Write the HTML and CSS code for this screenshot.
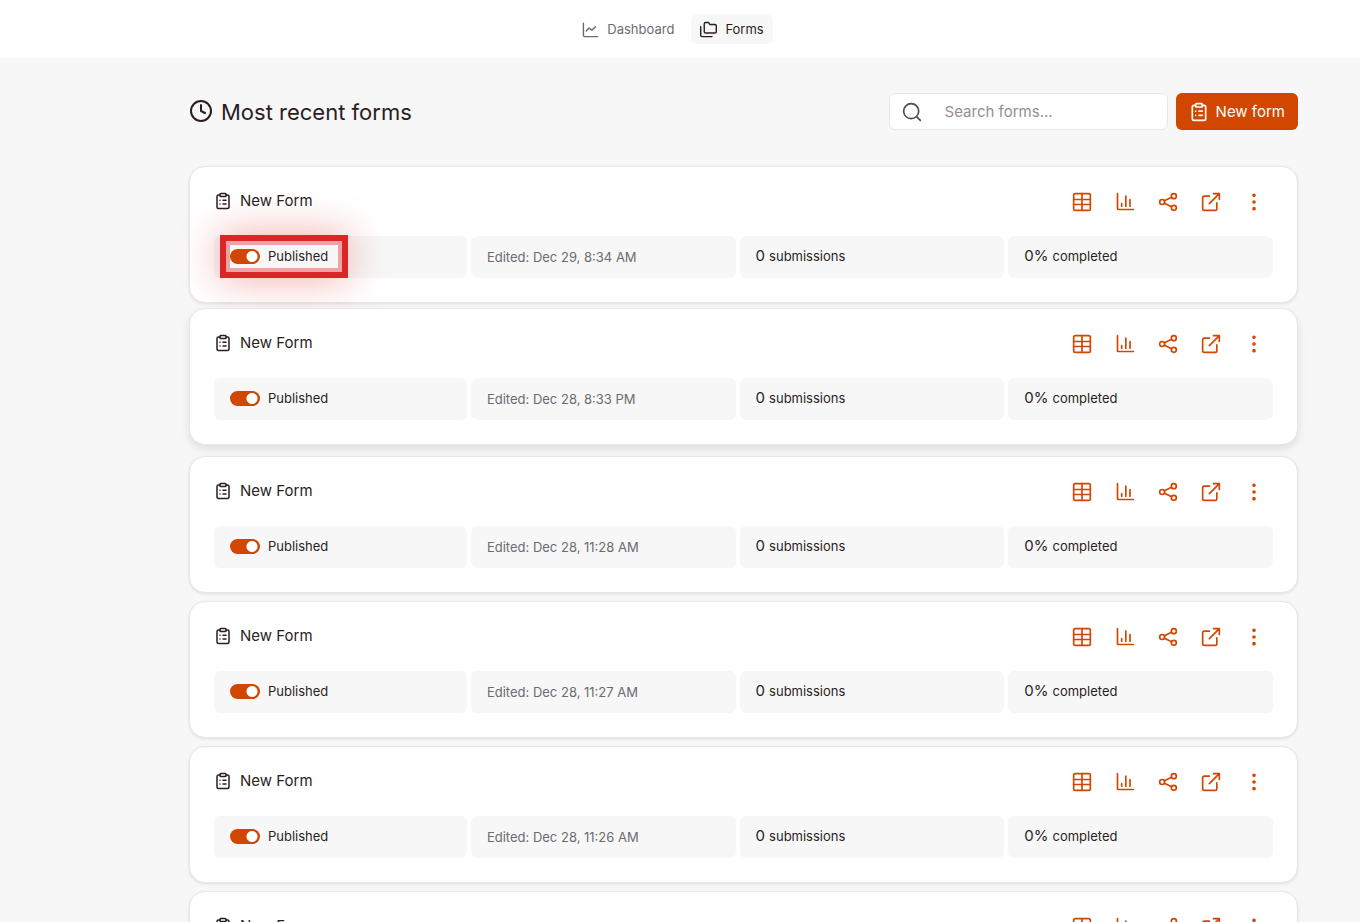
FILE: index.html
```html
<!DOCTYPE html>
<html lang="en">
<head>
    <meta charset="UTF-8">
    <meta name="viewport" content="width=device-width, initial-scale=1.0">
    <title>Forms</title>
    <link rel="stylesheet" href="styles.css">
</head>
<body>
<svg class="sprite" aria-hidden="true">
    <symbol id="i-clipboard" viewBox="0 0 24 24"><rect x="8" y="2" width="8" height="4" rx="1"/><path d="M16 4h2a2 2 0 0 1 2 2v14a2 2 0 0 1-2 2H6a2 2 0 0 1-2-2V6a2 2 0 0 1 2-2h2M12 11h4M12 16h4M8 11h.01M8 16h.01"/></symbol>
    <symbol id="i-table" viewBox="0 0 24 24"><rect x="2" y="2" width="20" height="20" rx="2"/><path d="M12 2v20M2 9h20M2 15h20"/></symbol>
    <symbol id="i-chart" viewBox="0 0 24 24"><path d="M3 2v18a1 1 0 0 0 1 1h18M8 17v-3M13 17V5M18 17v-8"/></symbol>
    <symbol id="i-share" viewBox="0 0 24 24"><circle cx="19" cy="5" r="3"/><circle cx="5" cy="12" r="3"/><circle cx="19" cy="19" r="3"/><path d="M7.700 13.400l8.600 4.200M16.300 6.400l-8.600 4.200"/></symbol>
    <symbol id="i-open" viewBox="0 0 24 24"><path d="M10 5H4a2 2 0 0 0-2 2v13a2 2 0 0 0 2 2h13a2 2 0 0 0 2-2v-7M15 2h7v7M22 2L10 14"/></symbol>
    <symbol id="i-more" viewBox="0 0 24 24"><circle cx="12" cy="4" r="1.200"/><circle cx="12" cy="12" r="1.200"/><circle cx="12" cy="20" r="1.200"/></symbol>
</svg>

<header class="topbar">
    <nav class="nav">
        <a href="#" class="nav-link">
            <svg class="icon" viewBox="0 0 24 24"><path d="M2 3v17a2 2 0 0 0 2 2h18M6 14l4-4 4 3 5-5"/></svg>
            Dashboard
        </a>
        <a href="#" class="nav-link active">
            <svg class="icon" viewBox="0 0 24 24"><path d="M8 17a2 2 0 0 1-2-2V4a2 2 0 0 1 2-2h4l2 3h7a2 2 0 0 1 2 2v8a2 2 0 0 1-2 2zM1 8v12a2 2 0 0 0 2 2h14"/></svg>
            Forms
        </a>
    </nav>
</header>

<main class="container">
    <div class="toolbar">
        <h1 class="heading">
            <svg class="icon" viewBox="0 0 24 24"><circle cx="12" cy="11" r="10"/><path d="M12 5v6l4 2"/></svg>
            Most recent forms
        </h1>
        <div class="tools">
            <div class="search">
                <svg class="icon" viewBox="0 0 24 24"><circle cx="11" cy="11" r="9"/><path d="M22 22l-4.500-4.500"/></svg>
                <input type="text" class="search-input" placeholder="Search forms..." aria-label="Search forms">
            </div>
            <button class="btn"><svg class="icon"><use href="#i-clipboard"/></svg>New form</button>
        </div>
    </div>
    <div class="form-list" id="formList"></div>
</main>

<script src="script.js"></script>
</body>
</html>
```
FILE: styles.css
```css
* {
    box-sizing: border-box;
}
body {
    margin: 0;
    background-color: #f7f7f7;
    color: #2b1d22;
    font-family: Inter, "Liberation Sans", sans-serif;
    font-size: 13px;
    line-height: 20px;
    height: 100vh;
    overflow: hidden;
}
button, input {
    font-family: inherit;
}
.sprite {
    display: none;
}
.icon {
    width: 20px;
    height: 20px;
    flex: none;
    fill: none;
    stroke: currentColor;
    stroke-width: 2;
    stroke-linecap: round;
    stroke-linejoin: round;
}
.topbar {
    background-color: white;
    padding: 14px 14px 14px 0;
}
.nav {
    display: flex;
    justify-content: center;
    gap: 8px;
}
.nav-link {
    display: flex;
    align-items: center;
    gap: 8px;
    height: 30px;
    padding: 0 9px;
    border-radius: 6px;
    color: #6b6b70;
    text-decoration: none;
}
.nav-link .icon {
    width: 17px;
    height: 17px;
}
.nav-link.active {
    background-color: #f7f7f7;
    color: #2b1d22;
}
.container {
    padding: 35px 62px 0 189px;
}
.toolbar {
    display: flex;
    justify-content: space-between;
    align-items: center;
    margin-bottom: 36px;
}
.heading {
    display: flex;
    align-items: center;
    gap: 8px;
    margin: 0;
    font-size: 22px;
    line-height: 32px;
    font-weight: 400;
}
.heading .icon {
    width: 24px;
    height: 24px;
}
.tools {
    display: flex;
    gap: 8px;
}
.search {
    display: flex;
    align-items: center;
    gap: 23px;
    width: 279px;
    height: 37px;
    padding: 0 12px;
    background-color: white;
    border: 1px solid #e7e7e7;
    border-radius: 6px;
    color: #55484c;
}
.search-input {
    flex: 1;
    min-width: 0;
    padding: 0;
    border: none;
    outline: none;
    background: none;
    font-size: 15px;
}
.search-input::placeholder {
    color: #958e90;
}
.btn {
    display: flex;
    align-items: center;
    gap: 7px;
    height: 37px;
    padding: 0 13px;
    border: none;
    border-radius: 6px;
    background-color: #d14600;
    color: white;
    font-size: 15px;
}
.form-list {
    display: flex;
    flex-direction: column;
    gap: 8px;
}
.card {
    padding: 24px;
    background-color: white;
    border: 1px solid #e5e7eb;
    border-radius: 16px;
    box-shadow: 0 1px 3px rgba(0,0,0,0.1);
}
.card.raised {
    transform: translateY(-3px);
    box-shadow: 0 4px 8px rgba(0,0,0,0.1);
}
.card-head {
    display: flex;
    justify-content: space-between;
    align-items: center;
    height: 20px;
    margin-bottom: 25px;
}
.card-title {
    display: flex;
    align-items: center;
    gap: 8px;
    margin: 0;
    font-size: 15px;
    font-weight: 400;
}
.card-title .icon {
    width: 18px;
    height: 18px;
}
.card-actions {
    display: flex;
    gap: 5px;
    padding-top: 2px;
}
.action {
    display: flex;
    justify-content: center;
    width: 38px;
    padding: 0;
    border: none;
    background: none;
    color: #d14600;
}
.stats {
    display: grid;
    grid-template-columns: 43fr 45fr 45fr 45fr;
    gap: 4px;
}
.stat {
    display: flex;
    align-items: center;
    height: 42px;
    padding: 0 16px 2px;
    border-radius: 6px;
    background-color: #f7f7f7;
}
.stat.edited {
    padding-bottom: 0;
    color: #6b6b70;
}
.stat .num {
    font-size: 15px;
    margin-right: 4px;
}
.toggle {
    position: relative;
    display: flex;
    align-items: center;
    gap: 8px;
    height: 23px;
    padding-right: 10px;
}
.toggle input {
    appearance: none;
    width: 30px;
    height: 15px;
    margin: 0;
    border-radius: 8px;
    background: radial-gradient(circle at 22px 50%, white 5px, #d14600 6px);
}
/* red frame with a glow around the toggle */
.toggle.highlight::after {
    content: "";
    position: absolute;
    inset: -10px;
    border: 6px solid #dc2626;
    box-shadow: inset 0 0 0 4px rgba(220,38,38,0.4), 0 0 40px rgba(220,38,38,0.4);
}
```
FILE: script.js
```js
const forms = [
    {edited: 'Dec 29, 8:34 AM', highlight: true},
    {edited: 'Dec 28, 8:33 PM', raised: true},
    {edited: 'Dec 28, 11:28 AM'},
    {edited: 'Dec 28, 11:27 AM'},
    {edited: 'Dec 28, 11:26 AM'},
    {edited: ''}
];
const actions = [['table', 'Submissions'], ['chart', 'Summary'], ['share', 'Share'], ['open', 'Open'], ['more', 'More']];

document.getElementById('formList').innerHTML = forms.map((form, i) => `
    <section class="card ${form.raised ? 'raised' : ''}">
        <div class="card-head">
            <h2 class="card-title"><svg class="icon"><use href="#i-clipboard"/></svg>New Form</h2>
            <div class="card-actions">
                ${actions.map(([icon, label]) => `<button class="action" aria-label="${label}"><svg class="icon"><use href="#i-${icon}"/></svg></button>`).join('')}
            </div>
        </div>
        ${form.edited ? `<div class="stats">
            <div class="stat">
                <label class="toggle ${form.highlight ? 'highlight' : ''}" for="pub${i}"><input type="checkbox" id="pub${i}" checked>Published</label>
            </div>
            <div class="stat edited">Edited: ${form.edited}</div>
            <div class="stat"><span class="num">0</span>submissions</div>
            <div class="stat"><span class="num">0%</span>completed</div>
        </div>` : ''}
    </section>
`).join('');
```
